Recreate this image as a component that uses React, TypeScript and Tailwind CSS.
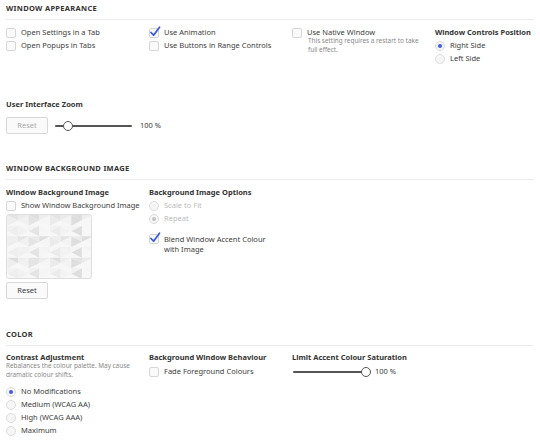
import type { ReactNode } from "react";

const FONT = "font-['Noto_Sans','Open_Sans',sans-serif]";

function Tick() {
  return (
    <svg viewBox="0 0 12 12" className="absolute -left-[1px] -top-[3px] h-[12px] w-[12px] overflow-visible">
      <path d="M2 6.5 L4.6 9.2 L10.5 1.2" fill="none" stroke="#3d5bdc" strokeWidth="1.8" strokeLinecap="round" strokeLinejoin="round" />
    </svg>
  );
}

function Checkbox({ checked = false, label, disabled = false }: { checked?: boolean; label: ReactNode; disabled?: boolean }) {
  return (
    <div className="flex h-[13px] items-center gap-[5px] whitespace-nowrap">
      <span className="relative h-[10px] w-[10px] shrink-0 rounded-[2px] border border-[#d6d6d6] bg-[#fafafa]">
        {checked && <Tick />}
      </span>
      <span className={disabled ? "text-[#bbb]" : "text-[#3c3c3c]"}>{label}</span>
    </div>
  );
}

function Radio({ checked = false, label, disabled = false }: { checked?: boolean; label: string; disabled?: boolean }) {
  return (
    <div className="flex h-[13px] items-center gap-[5px] whitespace-nowrap">
      <span className="flex h-[10px] w-[10px] shrink-0 items-center justify-center rounded-full border border-[#dcdcdc] bg-[#f6f6f6]">
        {checked && <span className={`h-[4px] w-[4px] rounded-full ${disabled ? "bg-[#c4c4c4]" : "bg-[#3d5bdc]"}`} />}
      </span>
      <span className={disabled ? "text-[#bbb]" : "text-[#3c3c3c]"}>{label}</span>
    </div>
  );
}

function Label({ children }: { children: ReactNode }) {
  return <div className="flex h-[13px] items-center whitespace-nowrap font-bold text-[#333]">{children}</div>;
}

function Note({ children }: { children: ReactNode }) {
  return <div className="text-[6.4px] leading-[9px] text-[#888]">{children}</div>;
}

function SectionTitle({ children }: { children: string }) {
  return (
    <div className="border-b border-[#ececec] pb-[6px] pt-[3px] text-[7.5px] font-bold leading-[10px] tracking-[0.04em] text-[#333]">
      {children}
    </div>
  );
}

function Slider({ value, width }: { value: number; width: number }) {
  const pos = (value / 100) * (width - 10) + 5;
  return (
    <div className="relative h-[10px]" style={{ width }}>
      <div className="absolute left-0 right-0 top-[4px] h-[2px] rounded bg-[#555]" />
      <div
        className="absolute top-0 h-[10px] w-[10px] rounded-full border border-[#555] bg-white"
        style={{ left: pos - 5 }}
      />
    </div>
  );
}

function Pattern() {
  const shades = ["#eeeeee", "#f3f3f3", "#e4e4e4", "#f7f7f7", "#ebebeb", "#f1f1f1", "#dedede", "#f5f5f5"];
  const tris: ReactNode[] = [];
  const s = 11;
  let k = 0;
  for (let r = 0; r < 7; r++) {
    for (let c = 0; c < 9; c++) {
      const x = c * s;
      const y = r * s;
      const flip = (r + c) % 2 === 0;
      const f1 = shades[(k * 5 + r * 3) % shades.length];
      const f2 = shades[(k * 3 + c * 7 + 2) % shades.length];
      k++;
      tris.push(
        <polygon key={`a${r}-${c}`} points={flip ? `${x},${y} ${x + s},${y + s / 2} ${x},${y + s}` : `${x + s},${y} ${x},${y + s / 2} ${x + s},${y + s}`} fill={f1} />,
        <polygon key={`b${r}-${c}`} points={flip ? `${x},${y} ${x + s},${y} ${x + s},${y + s / 2}` : `${x},${y} ${x + s},${y} ${x},${y + s / 2}`} fill={f2} />,
      );
    }
  }
  return (
    <div className="mt-[2px] h-[65px] w-[86px] overflow-hidden rounded-[3px] border border-[#dedede] bg-[#f7f7f7]">
      <svg viewBox="0 0 86 65" className="h-full w-full">
        {tris}
      </svg>
    </div>
  );
}

function Button({ children, disabled = false }: { children: string; disabled?: boolean }) {
  return (
    <button
      type="button"
      className={`h-[17px] w-[42px] rounded-[2px] border border-[#d8d8d8] bg-[#fafafa] text-[7.5px] ${disabled ? "text-[#aaa]" : "text-[#3c3c3c]"}`}
    >
      {children}
    </button>
  );
}

export default function App() {
  return (
    <div className={`h-[445px] w-[540px] overflow-hidden bg-white px-[6px] text-[7.5px] leading-[13px] ${FONT}`}>
      <SectionTitle>WINDOW APPEARANCE</SectionTitle>
      <div className="mt-[6px] grid grid-cols-[143px_143px_143px_1fr]">
        <div>
          <Checkbox label="Open Settings in a Tab" />
          <Checkbox label="Open Popups in Tabs" />
        </div>
        <div>
          <Checkbox checked label="Use Animation" />
          <Checkbox label="Use Buttons in Range Controls" />
        </div>
        <div>
          <Checkbox label="Use Native Window" />
          <div className="-mt-[2px] w-[128px] pl-[16px] [&>div]:leading-[8.5px]">
            <Note>This setting requires a restart to take full effect.</Note>
          </div>
        </div>
        <div>
          <Label>Window Controls Position</Label>
          <Radio checked label="Right Side" />
          <Radio label="Left Side" />
        </div>
      </div>

      <div className="mt-[33px]">
        <Label>User Interface Zoom</Label>
        <div className="mt-[6px] flex items-center">
          <Button disabled>Reset</Button>
          <div className="ml-[7px]">
            <Slider value={12} width={77} />
          </div>
          <span className="ml-[8px] text-[#3c3c3c]">100 %</span>
        </div>
      </div>

      <div className="mt-[26px]">
        <SectionTitle>WINDOW BACKGROUND IMAGE</SectionTitle>
      </div>
      <div className="mt-[6px] grid grid-cols-[143px_143px_1fr]">
        <div>
          <Label>Window Background Image</Label>
          <Checkbox label="Show Window Background Image" />
          <Pattern />
          <div className="mt-[3px]">
            <Button>Reset</Button>
          </div>
        </div>
        <div>
          <Label>Background Image Options</Label>
          <Radio disabled label="Scale to Fit" />
          <Radio disabled checked label="Repeat" />
          <div className="mt-[9px] flex gap-[5px] leading-[10px]">
            <span className="relative h-[10px] w-[10px] shrink-0 rounded-[2px] border border-[#d6d6d6] bg-[#fafafa]">
              <Tick />
            </span>
            <span className="text-[#3c3c3c]">
              Blend Window Accent Colour
              <br />
              with Image
            </span>
          </div>
        </div>
        <div />
      </div>

      <div className="mt-[27px]">
        <SectionTitle>COLOR</SectionTitle>
      </div>
      <div className="mt-[5px] grid grid-cols-[143px_143px_1fr]">
        <div>
          <Label>Contrast Adjustment</Label>
          <div className="-mt-[3px] w-[132px]">
            <Note>Rebalances the colour palette. May cause dramatic colour shifts.</Note>
          </div>
          <div className="mt-[6px]">
            <Radio checked label="No Modifications" />
            <Radio label="Medium (WCAG AA)" />
            <Radio label="High (WCAG AAA)" />
            <Radio label="Maximum" />
          </div>
        </div>
        <div>
          <Label>Background Window Behaviour</Label>
          <div className="mt-[1px]">
            <Checkbox label="Fade Foreground Colours" />
          </div>
        </div>
        <div>
          <Label>Limit Accent Colour Saturation</Label>
          <div className="mt-[1px] flex h-[13px] items-center">
            <div className="ml-[1px]">
              <Slider value={100} width={78} />
            </div>
            <span className="ml-[4px] text-[#3c3c3c]">100 %</span>
          </div>
        </div>
      </div>
    </div>
  );
}
